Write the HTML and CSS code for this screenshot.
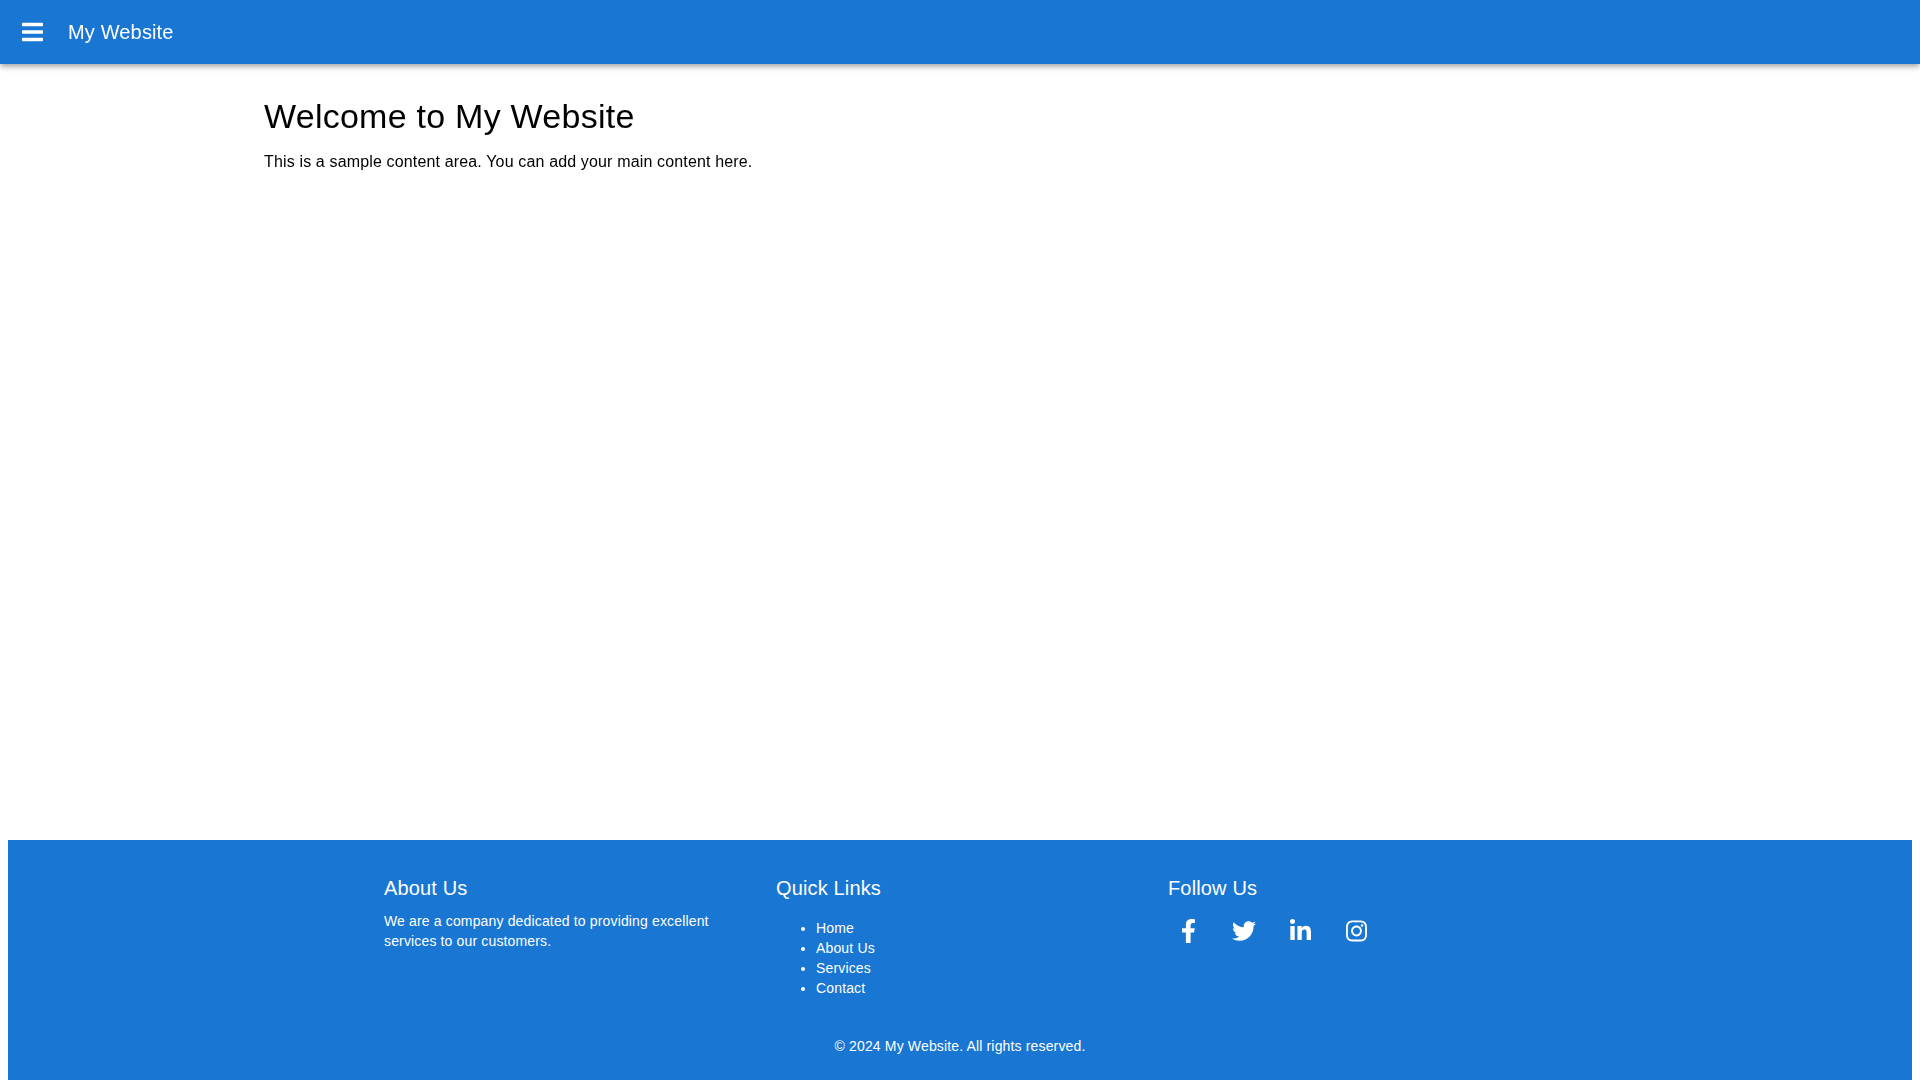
FILE: index.html
```html
<!DOCTYPE html>
<html lang="en">
<head>
<meta charset="utf-8">
<title>My Website</title>
<link rel="stylesheet" href="styles.css">
</head>
<body>
<header class="appbar">
  <button class="icon-btn menu-btn" aria-label="menu">
    <svg class="icon" viewBox="0 0 448 512" aria-hidden="true"><path d="M16 132h416c8.837 0 16-7.163 16-16V76c0-8.837-7.163-16-16-16H16C7.163 60 0 67.163 0 76v40c0 8.837 7.163 16 16 16zm0 160h416c8.837 0 16-7.163 16-16v-40c0-8.837-7.163-16-16-16H16c-8.837 0-16 7.163-16 16v40c0 8.837 7.163 16 16 16zm0 160h416c8.837 0 16-7.163 16-16v-40c0-8.837-7.163-16-16-16H16c-8.837 0-16 7.163-16 16v40c0 8.837 7.163 16 16 16z"/></svg>
  </button>
  <div class="brand">My Website</div>
</header>
<main class="main">
  <h1 class="page-title">Welcome to My Website</h1>
  <p class="page-text">This is a sample content area. You can add your main content here.</p>
</main>
<footer class="footer">
  <div class="footer-inner">
    <div class="footer-grid">
      <section class="footer-col">
        <h2 class="footer-heading">About Us</h2>
        <p class="footer-text">We are a company dedicated to providing excellent services to our customers.</p>
      </section>
      <section class="footer-col">
        <h2 class="footer-heading">Quick Links</h2>
        <ul class="footer-links">
          <li>Home</li>
          <li>About Us</li>
          <li>Services</li>
          <li>Contact</li>
        </ul>
      </section>
      <section class="footer-col">
        <h2 class="footer-heading">Follow Us</h2>
        <div class="socials">
          <a class="icon-btn" aria-label="Facebook"><svg class="icon" viewBox="0 0 320 512" aria-hidden="true"><path d="M279.14 288l14.22-92.66h-88.91v-60.13c0-25.35 12.42-50.06 52.24-50.06h40.42V6.26S260.43 0 225.36 0c-73.22 0-121.08 44.38-121.08 124.72v70.62H22.89V288h81.39v224h100.17V288z"/></svg></a>
          <a class="icon-btn" aria-label="Twitter"><svg class="icon" viewBox="0 0 512 512" aria-hidden="true"><path d="M459.37 151.716c.325 4.548.325 9.097.325 13.645 0 138.72-105.583 298.558-298.558 298.558-59.452 0-114.68-17.219-161.137-47.106 8.447.974 16.568 1.299 25.34 1.299 49.055 0 94.213-16.568 130.274-44.832-46.132-.975-84.792-31.188-98.112-72.772 6.498.974 12.995 1.624 19.818 1.624 9.421 0 18.843-1.3 27.614-3.573-48.081-9.747-84.143-51.98-84.143-102.985v-1.299c13.969 7.797 30.214 12.67 47.431 13.319-28.264-18.843-46.781-51.005-46.781-87.391 0-19.492 5.197-37.36 14.294-52.954 51.655 63.675 129.3 105.258 216.365 109.807-1.624-7.797-2.599-15.918-2.599-24.04 0-57.828 46.782-104.934 104.934-104.934 30.213 0 57.502 12.67 76.67 33.137 23.715-4.548 46.456-13.645 66.599-25.665-7.798 24.366-24.366 44.833-46.132 57.827 21.117-2.273 41.584-8.122 60.426-16.243-14.292 20.791-32.161 39.308-52.628 54.253z"/></svg></a>
          <a class="icon-btn" aria-label="LinkedIn"><svg class="icon" viewBox="0 0 448 512" aria-hidden="true"><path d="M100.28 448H7.4V148.9h92.88zM53.79 108.1C24.09 108.1 0 83.5 0 53.8a53.79 53.79 0 0 1 107.58 0c0 29.7-24.1 54.3-53.79 54.3zM447.9 448h-92.68V302.4c0-34.7-.7-79.2-48.29-79.2-48.29 0-55.69 37.7-55.69 76.7V448h-92.78V148.9h89.08v40.8h1.3c12.4-23.5 42.69-48.3 87.88-48.3 94 0 111.28 61.9 111.28 142.3V448z"/></svg></a>
          <a class="icon-btn" aria-label="Instagram"><svg class="icon" viewBox="0 0 448 512" aria-hidden="true"><path d="M224.1 141c-63.6 0-114.9 51.3-114.9 114.9s51.3 114.9 114.9 114.9S339 319.5 339 255.9 287.7 141 224.1 141zm0 189.6c-41.1 0-74.7-33.5-74.7-74.7s33.5-74.7 74.7-74.7 74.7 33.5 74.7 74.7-33.6 74.7-74.7 74.7zm146.4-194.3c0 14.9-12 26.8-26.8 26.8-14.9 0-26.8-12-26.8-26.8s12-26.8 26.8-26.8 26.8 12 26.8 26.8zm76.1 27.2c-1.7-35.9-9.9-67.7-36.2-93.9-26.2-26.2-58-34.4-93.9-36.2-37-2.1-147.9-2.1-184.9 0-35.8 1.7-67.6 9.9-93.9 36.1s-34.4 58-36.2 93.9c-2.1 37-2.1 147.9 0 184.9 1.7 35.9 9.9 67.7 36.2 93.9s58 34.4 93.9 36.2c37 2.1 147.9 2.1 184.9 0 35.9-1.7 67.7-9.9 93.9-36.2 26.2-26.2 34.4-58 36.2-93.9 2.1-37 2.1-147.8 0-184.8zM398.8 388c-7.8 19.6-22.9 34.7-42.6 42.6-29.5 11.7-99.5 9-132.1 9s-102.7 2.6-132.1-9c-19.6-7.8-34.7-22.9-42.6-42.6-11.7-29.5-9-99.5-9-132.1s-2.6-102.7 9-132.1c7.8-19.6 22.9-34.7 42.6-42.6 29.5-11.7 99.5-9 132.1-9s102.7-2.6 132.1 9c19.6 7.8 34.7 22.9 42.6 42.6 11.7 29.5 9 99.5 9 132.1s2.7 102.7-9 132.1z"/></svg></a>
        </div>
      </section>
    </div>
    <p class="copyright">© 2024 My Website. All rights reserved.</p>
  </div>
</footer>
</body>
</html>
```

FILE: styles.css
```css
* {
  box-sizing: border-box;
}

html {
  scrollbar-width: none;
}

body {
  margin: 8px;
  min-height: 100vh;
  display: flex;
  flex-direction: column;
  font-family: "Liberation Sans", Arial, sans-serif;
  color: #000;
  background: #fff;
  box-sizing: content-box;
}

.appbar {
  position: fixed;
  top: 0;
  left: 0;
  right: 0;
  z-index: 10;
  height: 64px;
  display: flex;
  align-items: center;
  padding: 0 24px;
  background: #1976d2;
  color: #fff;
  box-shadow: 0 2px 4px -1px rgba(0, 0, 0, 0.2), 0 4px 5px 0 rgba(0, 0, 0, 0.14), 0 1px 10px 0 rgba(0, 0, 0, 0.12);
  will-change: opacity;
}

.icon-btn {
  width: 40px;
  height: 40px;
  display: flex;
  align-items: center;
  justify-content: center;
  padding: 0;
  border: 0;
  background: none;
  color: #fff;
}

.menu-btn {
  margin: 0 16px 0 -12px;
}

.icon {
  display: block;
  height: 24px;
  fill: currentColor;
}

.brand {
  font-size: 20px;
  line-height: 32px;
  letter-spacing: 0.0075em;
}

.main {
  flex: 1;
  width: 100%;
  max-width: 1440px;
  margin: 64px auto 0;
  padding: 24px;
  will-change: opacity;
}

.page-title {
  margin: 0 0 0.35em;
  font-size: 34px;
  font-weight: 400;
  line-height: 1.235;
  letter-spacing: 0.00735em;
}

.page-text {
  margin: 0;
  font-size: 16px;
  line-height: 24px;
  letter-spacing: 0.00938em;
}

.footer {
  padding: 32px 0;
  background: #1976d2;
  color: #fff;
  will-change: opacity;
}

.footer-inner {
  max-width: 1200px;
  margin: 0 auto;
  padding: 0 24px;
}

.footer-grid {
  display: grid;
  grid-template-columns: repeat(3, 392px);
  margin-left: -24px;
}

.footer-col {
  padding-left: 24px;
}

.footer-heading {
  margin: 0 0 7px;
  font-size: 20px;
  font-weight: 400;
  line-height: 32px;
  letter-spacing: 0.0075em;
}

.footer-text,
.footer-links,
.copyright {
  font-size: 14px;
  line-height: 20px;
  letter-spacing: 0.01071em;
}

.footer-text {
  margin: 0;
}

.footer-links {
  margin: 14px 0;
  padding-left: 40px;
}

.socials {
  display: flex;
  gap: 16px;
}

.copyright {
  margin: 24px 0 0;
  text-align: center;
}
```
